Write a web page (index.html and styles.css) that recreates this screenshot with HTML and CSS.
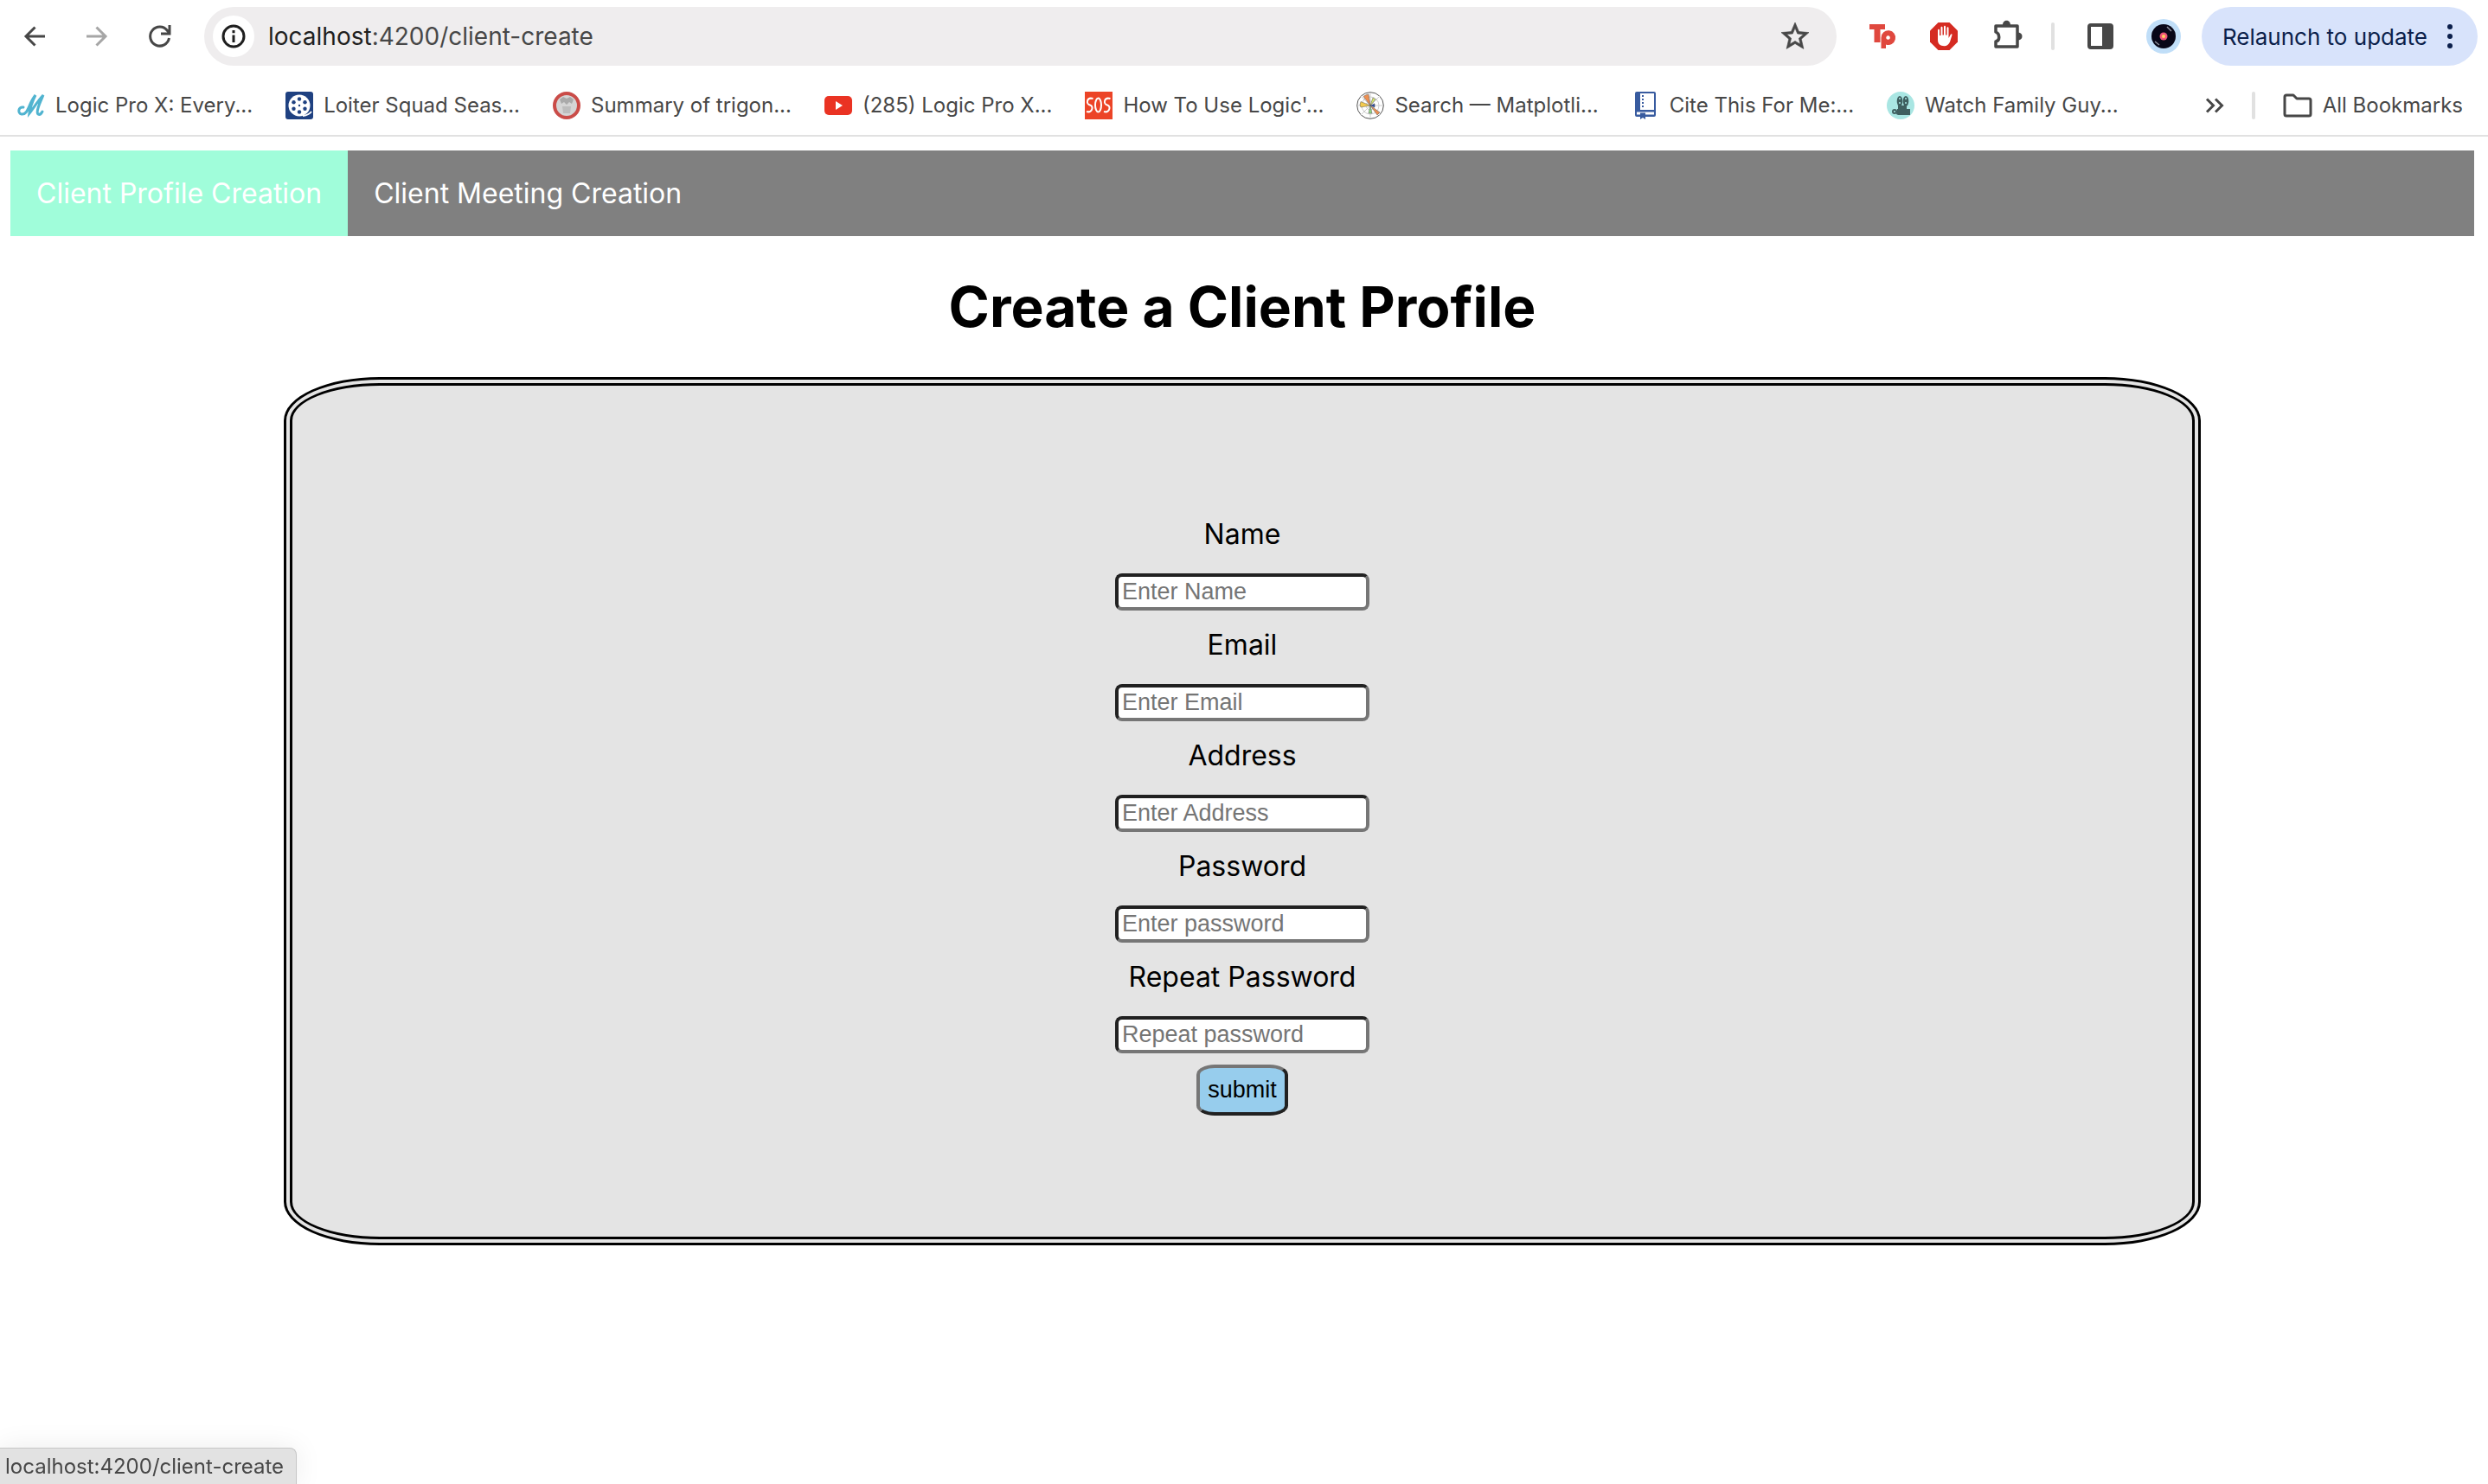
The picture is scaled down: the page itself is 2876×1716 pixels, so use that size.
FILE: index.html
```html
<!DOCTYPE html>
<html lang="en">
<head>
<meta charset="utf-8">
<title>Create a Client Profile</title>
<link rel="stylesheet" href="styles.css">
</head>
<body>
<header class="browser">
  <div class="toolbar">
    <div class="nav-buttons">
      <button class="icon-button" type="button" aria-label="Back"><svg width="24" height="24" viewBox="0 0 24 24" fill="none" stroke="#474747" stroke-width="3"><path d="M24 12H2M12.500 1.500 2 12l10.500 10.500"/></svg></button>
      <button class="icon-button" type="button" aria-label="Forward"><svg width="24" height="24" viewBox="0 0 24 24" fill="none" stroke="#a6a6a6" stroke-width="3"><path d="M0 12h22M11.500 1.500 22 12 11.500 22.500"/></svg></button>
      <button class="icon-button" type="button" aria-label="Reload"><svg width="26" height="26" viewBox="0 0 26 26" fill="none" stroke="#474747" stroke-width="3"><path d="M23.500 15A11 11 0 1 1 21.500 6.500L24 9M24 0v10H14"/></svg></button>
    </div>
    <div class="address">
      <button class="site-info" type="button" aria-label="Site information"><svg width="28" height="28" viewBox="0 0 28 28" fill="none" stroke="#1f1f1f" stroke-width="3"><circle cx="14" cy="14" r="12"/><path d="M14 12.500V21M14 7v3.200"/></svg></button>
      <span class="url"><span class="host">localhost</span>:4200/client-create</span>
      <button class="icon-button" type="button" aria-label="Bookmark this page"><svg width="32" height="32" viewBox="2 2 20 20" fill="#474747" stroke="#474747" stroke-width=".4"><path d="M22 9.240l-7.190-.62L12 2 9.190 8.630 2 9.240l5.460 4.730L5.820 21 12 17.270 18.180 21l-1.630-7.030L22 9.240zM12 15.400l-3.760 2.270 1-4.280-3.320-2.880 4.380-.38L12 6.100l1.710 4.040 4.380.38-3.320 2.880 1 4.280L12 15.400z"/></svg></button>
    </div>
    <div class="extensions">
      <svg width="32" height="32" viewBox="0 0 32 32" fill="#e0483e"><path d="M0 2h18v6h-5.500v15H5.500V8H0Z"/><path fill-rule="evenodd" d="M13.500 17.500a8.300 8.300 0 1 1 5.500 7.900V30h-5.500Zm8-2.300a2.300 2.300 0 1 0 .1 0Z"/></svg>
      <svg width="32" height="32" viewBox="0 0 32 32"><path fill="#d52b22" d="M9.500 0h13L32 9.500v13L22.500 32h-13L0 22.500v-13Z"/><path fill="#fff" d="M9 20V9c0-1.800 2-1.800 2 0v6h1.500V6c0-1.800 2-1.800 2 0v8.500H16V5c0-1.800 2-1.800 2 0v9.500h1.500V6.500c0-1.800 2-1.800 2 0V18l2.300-4c.8-1.200 2-.6 1.600.7L23 22.500c-1.500 3.200-3.500 4.700-6.500 4.700C12 27.200 9 25 9 20Z"/></svg>
      <svg width="32" height="36" viewBox="0 0 32 36"><path fill="none" stroke="#474747" stroke-width="3.500" stroke-linejoin="round" d="M6 6h25v24H6v-6c5-1 5-9 0-11Z"/><path fill="#474747" d="M14 5c0-7 9-7 9 0ZM32 13.500c6 0 6 9 0 9Z"/></svg>
      <span class="divider"></span>
      <svg width="30" height="30" viewBox="0 0 30 30"><rect x="2" y="2" width="26" height="26" rx="2" fill="none" stroke="#474747" stroke-width="4"/><path fill="#474747" d="M17 2h11v26H17Z"/></svg>
      <svg width="40" height="40" viewBox="0 0 40 40"><circle cx="20" cy="20" r="20" fill="#c0def8"/><circle cx="20" cy="20" r="14" fill="#080718"/><path d="m24 9 5 5M10 26l5 4" stroke="#8d8f9b" stroke-width="1.500"/><circle cx="20" cy="20" r="4.500" fill="#ed5579"/><circle cx="20" cy="20" r="2" fill="#ffd15c"/></svg>
    </div>
    <button class="relaunch" type="button">Relaunch to update<svg width="8" height="28" viewBox="0 0 8 28" fill="#0b1f4b"><circle cx="4" cy="3" r="3"/><circle cx="4" cy="14" r="3"/><circle cx="4" cy="25" r="3"/></svg></button>
  </div>
  <nav class="bookmarks" aria-label="Bookmarks">
    <a class="bookmark" href="#"><svg width="32" height="32" viewBox="0 0 32 32" fill="none" stroke="#51b4d0" stroke-width="3" stroke-linecap="round"><path d="M7 18c-6-1-7 7-2 8C13 27 13 13 21 4c-3 6-6 13-7 21C19 19 24 10 30 4c-3 7-9 19-6 22 2 1 4-1 5-3"/></svg><span>Logic Pro X: Every...</span></a>
    <a class="bookmark" href="#"><svg width="32" height="32" viewBox="0 0 32 32"><rect width="32" height="32" rx="3" fill="#1f4181"/><circle cx="16" cy="16" r="12.500" fill="#fff"/><g fill="#1f4181"><circle cx="16" cy="16" r="1.200"/><circle cx="16" cy="8.500" r="2.200"/><circle cx="22.500" cy="12.300" r="2.200"/><circle cx="22.500" cy="19.700" r="2.200"/><circle cx="16" cy="23.500" r="2.200"/><circle cx="9.500" cy="19.700" r="2.200"/><circle cx="9.500" cy="12.300" r="2.200"/></g><path d="M20 28q7-1 10-5" fill="none" stroke="#fff" stroke-width="2"/></svg><span>Loiter Squad Seas...</span></a>
    <a class="bookmark" href="#"><svg width="32" height="32" viewBox="0 0 32 32"><circle cx="16" cy="16" r="14" fill="#d5d5d5" stroke="#ca4c48" stroke-width="4"/><path fill="#aaa" d="m8 9 4-3 4 2 4-2 4 3-2 5-3-2-3 3-3-3-3 2Z"/><path fill="#bdbdbd" d="M11 17h10l-1 8h-8Z"/></svg><span>Summary of trigon...</span></a>
    <a class="bookmark" href="#"><svg width="32" height="32" viewBox="0 0 32 32"><rect y="5" width="32" height="22" rx="5" fill="#ea3323"/><path fill="#fff" d="m13 11 8 5-8 5Z"/></svg><span>(285) Logic Pro X...</span></a>
    <a class="bookmark" href="#"><svg width="32" height="32" viewBox="0 0 32 32"><rect width="32" height="32" fill="#ec4427"/><g fill="none" stroke="#fff" stroke-width="2"><path d="M9.500 8C2 6 1 14 6 15.500S8 25 2 23"/><ellipse cx="15.500" cy="15.500" rx="3.500" ry="8"/><path d="M29.500 8C22 6 21 14 26 15.500S28 25 22 23"/></g></svg><span>How To Use Logic'...</span></a>
    <a class="bookmark" href="#"><svg width="32" height="32" viewBox="0 0 32 32"><circle cx="16" cy="16" r="15.300" fill="#fff" stroke="#555" stroke-width="1"/><g fill="none" stroke="#ccc"><circle cx="16" cy="16" r="10"/><circle cx="16" cy="16" r="5"/><path d="M16 1v30M1 16h30M5 5l22 22M27 5 5 27"/></g><g stroke="#555" stroke-width=".5"><path fill="#ed8f51" d="M16 16 8 5.500Q11 3 14 3ZM16 16l11 8-3 3Z"/><path fill="#f3ca4e" d="M16 16 5 11.500q-2 4 0 6.500Z"/><path fill="#d8e86b" d="m16 16 3-9 3 2Z"/><path fill="#8ed982" d="m16 16-2 9h4Z"/><path fill="#2749a7" d="m16 16 5-2v4Z"/></g></svg><span>Search — Matplotli...</span></a>
    <a class="bookmark" href="#"><svg width="32" height="32" viewBox="0 0 32 32"><path fill="#385b9f" fill-rule="evenodd" d="M6 0h20q2 0 2 2v25q0 2-2 2H16v3l-3-2-3 2v-3H6q-2 0-2-2V2q0-2 2-2Zm4 2v19h16V2ZM6 23.500v3h4v-2h6v2h10v-3Z"/><path stroke="#385b9f" stroke-width="2" stroke-dasharray="2 2" d="M13 4v16"/></svg><span>Cite This For Me:...</span></a>
    <a class="bookmark" href="#"><svg width="32" height="32" viewBox="0 0 32 32"><circle cx="16" cy="16" r="16" fill="#a9e6e3"/><g fill="#3f5f60"><ellipse cx="15" cy="11" rx="3.300" ry="6"/><ellipse cx="22" cy="11" rx="3.300" ry="6"/><path d="M13 16h10v5H13ZM12 20h15v7H13l-2-1Z"/><circle cx="9" cy="23" r="3"/></g><g fill="#a9e6e3"><circle cx="15" cy="8" r="1"/><circle cx="15" cy="13" r="1"/><circle cx="22" cy="8" r="1"/><circle cx="22" cy="13" r="1"/><circle cx="9" cy="23" r="1"/></g></svg><span>Watch Family Guy...</span></a>
    <div class="bookmarks-end">
      <button class="icon-button" type="button" aria-label="More bookmarks"><svg width="22" height="18" viewBox="0 0 22 18" fill="none" stroke="#474747" stroke-width="3"><path d="m2 1.500 7.500 7.500L2 16.500M12 1.500 19.500 9 12 16.500"/></svg></button>
      <span class="divider"></span>
      <a class="bookmark" href="#"><svg width="34" height="26" viewBox="0 0 34 26" fill="none" stroke="#474747" stroke-width="3" stroke-linejoin="round"><path d="M2 3q0-2 2-2h8l4 4h14q2 0 2 2v16q0 2-2 2H4q-2 0-2-2Z"/></svg><span>All Bookmarks</span></a>
    </div>
  </nav>
</header>
<div class="page">
  <nav class="site-nav" aria-label="Main">
    <a class="site-link active" href="#">Client Profile Creation</a>
    <a class="site-link" href="#">Client Meeting Creation</a>
  </nav>
  <main>
    <h1 class="title">Create a Client Profile</h1>
    <form class="card">
      <div class="field"><label for="name">Name</label><input id="name" type="text" placeholder="Enter Name"></div>
      <div class="field"><label for="email">Email</label><input id="email" type="text" placeholder="Enter Email"></div>
      <div class="field"><label for="address">Address</label><input id="address" type="text" placeholder="Enter Address"></div>
      <div class="field"><label for="password">Password</label><input id="password" type="password" placeholder="Enter password"></div>
      <div class="field"><label for="repeat">Repeat Password</label><input id="repeat" type="password" placeholder="Repeat password"></div>
      <button class="submit" type="button">submit</button>
    </form>
  </main>
</div>
<div class="status">localhost:4200/client-create</div>
</body>
</html>
```
FILE: styles.css
```css
* { box-sizing: border-box; }
body {
  margin: 0;
  background: #fff;
  color: #000;
  font-family: Inter, "Liberation Sans", sans-serif;
}
button { margin: 0; padding: 0; border: 0; background: none; font: inherit; }
a { color: inherit; text-decoration: none; }
svg { display: block; flex: none; overflow: visible; }

.browser { border-bottom: 2px solid #e1e1e1; color: #474747; }
.toolbar {
  display: flex;
  align-items: center;
  padding: 8px 12px 8px 28px;
}
.nav-buttons { display: flex; align-items: center; gap: 48px; width: 208px; }
.address {
  display: flex;
  flex: 1;
  align-items: center;
  height: 68px;
  padding: 0 32px 0 10px;
  border-radius: 34px;
  background: #efedee;
}
.site-info {
  display: grid;
  place-items: center;
  width: 48px;
  height: 48px;
  border-radius: 50%;
  background: #fff;
}
.url { flex: 1; margin-left: 16px; font-size: 28px; line-height: 40px; }
.host { color: #1f1f1f; }
.extensions { display: flex; align-items: center; gap: 38px; margin: 0 24px 0 38px; }
.divider { width: 4px; height: 32px; border-radius: 2px; background: #e1e1e1; }
.relaunch {
  display: flex;
  align-items: center;
  gap: 22px;
  height: 68px;
  padding: 0 28px 0 24px;
  border-radius: 34px;
  background: #d8e3fb;
  color: #0b1f4b;
  font-size: 26px;
}

.bookmarks {
  display: flex;
  align-items: center;
  gap: 38px;
  height: 72px;
  padding: 4px 29px 0 20px;
  font-size: 24px;
  line-height: 32px;
  white-space: nowrap;
}
.bookmark { display: flex; align-items: center; gap: 12px; }
.bookmarks-end { display: flex; align-items: center; gap: 32px; margin-left: auto; }

.page { padding: 16px 16px 0 12px; }
.site-nav { display: flex; background: #808080; color: #fff; }
.site-link { padding: 30px 30px 29px; font-size: 32px; line-height: 40px; }
.site-link.active { background: #a0fdda; }
.title { margin: 43px 0; font-size: 64px; line-height: 77px; text-align: center; }
.card {
  display: flex;
  flex-direction: column;
  align-items: center;
  width: 77.8%;
  margin: 0 auto;
  padding: 140px 0;
  border: 10px double #000;
  border-radius: 5%;
  background: #e4e4e4;
}
.field { display: flex; flex-direction: column; align-items: center; gap: 13px; }
.field + .field { margin-top: 8px; }
.field label { font-size: 32px; line-height: 64px; }
.field input {
  width: 294px;
  height: 43px;
  padding: 0 4px;
  border: 4px solid;
  border-color: #212121 #767676 #767676 #212121;
  border-radius: 8px;
  background: #fff;
  font: 27px "Liberation Sans", Arial, sans-serif;
}
.field input::placeholder { color: #757575; }
.submit {
  margin-top: 13px;
  padding: 10px 9px;
  border: 4px solid;
  border-color: #767676 #212121 #212121 #767676;
  border-radius: 20%;
  background: #97cded;
  font: 27px/31px "Liberation Sans", Arial, sans-serif;
}

.status {
  position: fixed;
  bottom: 0;
  left: 0;
  padding: 5px 14px 4px 6px;
  border: solid #c6c6c6;
  border-width: 1px 1px 0 0;
  border-radius: 0 8px 0 0;
  background: #e2e2e2;
  box-shadow: 0 0 32px rgb(0 0 0 / 8%);
  color: #474747;
  font-size: 24px;
  line-height: 32px;
}
```
